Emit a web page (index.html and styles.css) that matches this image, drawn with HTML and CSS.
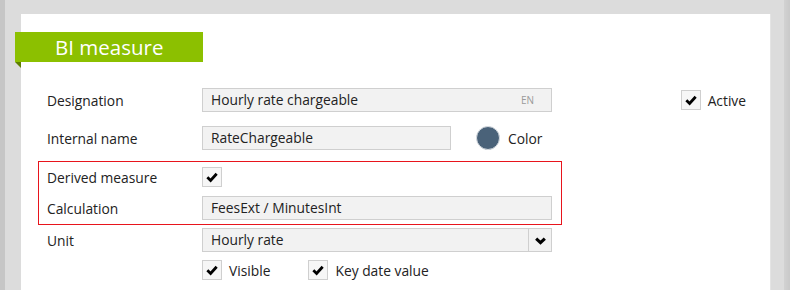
FILE: index.html
```html
<!DOCTYPE html>
<html lang="en">
<head>
    <meta charset="UTF-8">
    <title>BI measure</title>
    <link rel="stylesheet" href="styles.css">
</head>
<body>
    <div class="panel">
        <div class="banner">BI measure</div>

        <div class="row row-first">
            <div class="label">Designation</div>
            <div class="field field-wide">
                <span>Hourly rate chargeable</span>
                <span class="lang">EN</span>
            </div>
            <div class="check-item active">
                <span class="check">
                    <svg viewBox="0 0 12 12"><path d="M2 6.3 L4.8 9 L10 3.2"/></svg>
                </span>
                <span>Active</span>
            </div>
        </div>

        <div class="row">
            <div class="label">Internal name</div>
            <div class="field field-short">RateChargeable</div>
            <span class="swatch"></span>
            <span class="swatch-label">Color</span>
        </div>

        <div class="highlight">
            <div class="row row-check">
                <div class="label">Derived measure</div>
                <span class="check">
                    <svg viewBox="0 0 12 12"><path d="M2 6.3 L4.8 9 L10 3.2"/></svg>
                </span>
            </div>
            <div class="row">
                <div class="label">Calculation</div>
                <div class="field field-wide">FeesExt / MinutesInt</div>
            </div>
        </div>

        <div class="row row-unit">
            <div class="label">Unit</div>
            <div class="field field-wide select">
                <span>Hourly rate</span>
                <span class="select-btn">
                    <svg viewBox="0 0 12 12"><path d="M2 4.2 L6 8 L10 4.2"/></svg>
                </span>
            </div>
        </div>

        <div class="row row-check row-options">
            <div class="label"></div>
            <div class="check-item">
                <span class="check">
                    <svg viewBox="0 0 12 12"><path d="M2 6.3 L4.8 9 L10 3.2"/></svg>
                </span>
                <span>Visible</span>
            </div>
            <div class="check-item">
                <span class="check">
                    <svg viewBox="0 0 12 12"><path d="M2 6.3 L4.8 9 L10 3.2"/></svg>
                </span>
                <span>Key date value</span>
            </div>
        </div>
    </div>
</body>
</html>
```

FILE: styles.css
```css
html, body {
    height: 100%;
}

body {
    margin: 0;
    background: linear-gradient(to right,
        #c6c6c6 0, #c6c6c6 5px,
        #dcdcdc 5px, #dcdcdc calc(100% - 6px),
        #d2d2d2 calc(100% - 6px), #c9c9c9 100%);
    font-family: "Open Sans", "Noto Sans", sans-serif;
    font-size: 13.8px;
    color: #222;
    overflow: hidden;
}

.panel {
    margin: 14px 0 0 21px;
    width: 750px;
    height: calc(100% - 14px);
    box-sizing: border-box;
    background: #fff;
    border-right: 1px solid #e4e4e4;
    padding: 18px 24px 0 26px;
}

.banner {
    position: relative;
    margin-left: -32px;
    width: 188px;
    height: 30px;
    box-sizing: border-box;
    padding-left: 40px;
    background: #8cc000;
    color: #fff;
    font-size: 20.5px;
    line-height: 30px;
    margin-bottom: 26px;
}

/* little fold under the ribbon */
.banner::after {
    content: "";
    position: absolute;
    left: 0;
    bottom: -6px;
    border-top: 6px solid #5e7f00;
    border-left: 6px solid transparent;
}

.row {
    display: flex;
    align-items: center;
    height: 24px;
}

.row-first {
    margin-bottom: 14px;
}

.label {
    width: 155px;
    flex-shrink: 0;
}

.field {
    height: 24px;
    box-sizing: border-box;
    border: 1px solid #cfcfcf;
    background: #f2f2f2;
    padding: 0 8px;
    line-height: 22px;
    display: flex;
    align-items: center;
}

.field-wide {
    width: 350px;
}

.field-short {
    width: 249px;
}

.lang {
    margin-left: auto;
    margin-right: 9px;
    font-size: 10px;
    color: #9a9a9a;
}

.swatch {
    width: 22px;
    height: 22px;
    border-radius: 50%;
    background: #4a6279;
    border: 1px solid #d6dbe0;
    margin-left: 25px;
}

.swatch-label {
    margin-left: 8px;
}

.check-item {
    display: flex;
    align-items: center;
    gap: 7px;
}

.active {
    margin-left: auto;
}

.check {
    width: 20px;
    height: 20px;
    box-sizing: border-box;
    border: 1px solid #cfcfcf;
    background: #f6f6f6;
    display: flex;
    align-items: center;
    justify-content: center;
}

.check svg {
    width: 14px;
    height: 14px;
}

.check path,
.select-btn path {
    fill: none;
    stroke: #000;
    stroke-width: 2.4;
}

.select-btn path {
    stroke-width: 2.8;
}

.highlight {
    margin: 11px 0 0 -9px;
    width: 524px;
    box-sizing: border-box;
    border: 1px solid #e8141c;
    padding: 5px 0 4px 8px;
}

.highlight .row-check {
    height: 20px;
    margin-bottom: 9px;
}

.row-unit {
    margin-top: 3px;
}

.select {
    padding-right: 0;
}

.select-btn {
    margin-left: auto;
    width: 22px;
    height: 22px;
    border-left: 1px solid #cfcfcf;
    display: flex;
    align-items: center;
    justify-content: center;
}

.select-btn svg {
    width: 13px;
    height: 13px;
}

.row-options {
    margin-top: 8px;
    height: 20px;
}

.row-options .check-item {
    margin-right: 38px;
}
```
